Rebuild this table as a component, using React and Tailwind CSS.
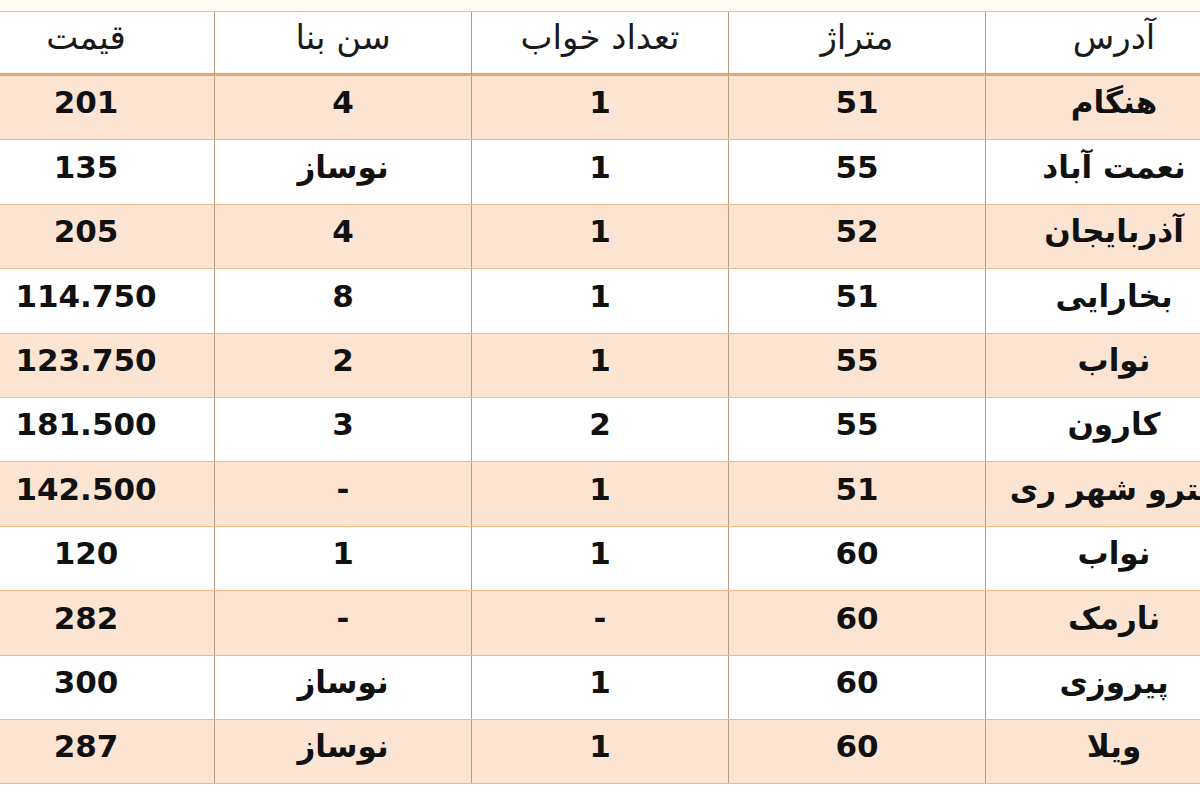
import React from 'react';

// ستون‌ها از راست به چپ: آدرس، متراژ، تعداد خواب، سن بنا، قیمت
const headers = ['آدرس', 'متراژ', 'تعداد خواب', 'سن بنا', 'قیمت'];

const rows = [
  ['هنگام', '51', '1', '4', '201'],
  ['نعمت آباد', '55', '1', 'نوساز', '135'],
  ['آذربایجان', '52', '1', '4', '205'],
  ['بخارایی', '51', '1', '8', '114.750'],
  ['نواب', '55', '1', '2', '123.750'],
  ['کارون', '55', '2', '3', '181.500'],
  ['مترو شهر ری', '51', '1', '-', '142.500'],
  ['نواب', '60', '1', '1', '120'],
  ['نارمک', '60', '-', '-', '282'],
  ['پیروزی', '60', '1', 'نوساز', '300'],
  ['ویلا', '60', '1', 'نوساز', '287'],
];

const font = { fontFamily: '"DejaVu Sans", Tahoma, sans-serif' };

export default function App() {
  return (
    <div className="w-[1200px] h-[800px] overflow-hidden bg-white" style={font}>
      <div className="h-[12px] bg-[#fffaf2] border-b border-[#f3b98a]" />
      <div dir="rtl" className="w-[1285px] ml-[-43px]">
        {/* Header */}
        <div className="grid grid-cols-5 h-[64px] bg-white border-b-[3px] border-[#eea468]">
          {headers.map((h, i) => (
            <div
              key={i}
              className="flex items-center justify-center pb-[12px] text-[34px] text-[#1a1a1a] border-l border-[#b99c7e]"
            >
              {h}
            </div>
          ))}
        </div>
        {/* Body */}
        {rows.map((r, ri) => (
          <div
            key={ri}
            className={
              'grid grid-cols-5 h-[64.4px] border-b border-[#f3b98a] ' +
              (ri % 2 === 0 ? 'bg-[#fce4d3]' : 'bg-white')
            }
          >
            {r.map((c, ci) => (
              <div
                key={ci}
                className="flex items-center justify-center pb-[10px] text-[31px] font-bold text-[#111] border-l border-[#b99c7e]"
              >
                {c}
              </div>
            ))}
          </div>
        ))}
      </div>
    </div>
  );
}
